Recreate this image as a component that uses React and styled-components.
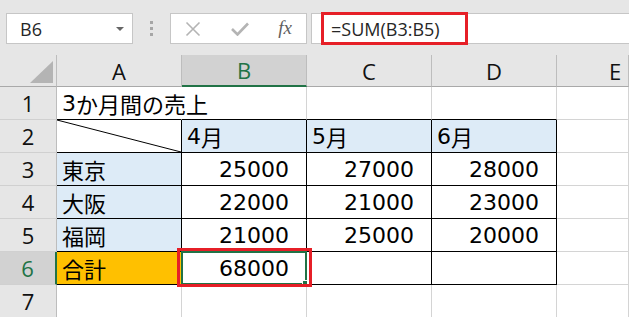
import { Fragment } from "react";
import styled, { createGlobalStyle } from "styled-components";

const GlobalStyle = createGlobalStyle`
  html, body {
    margin: 0;
    padding: 0;
    background: #ffffff;
    overflow: hidden;
  }
`;

const Page = styled.div`
  position: relative;
  width: 629px;
  height: 317px;
  overflow: hidden;
  font-family: "Open Sans", "Noto Sans", sans-serif;
`;

const Toolbar = styled.div`
  display: flex;
  align-items: flex-start;
  height: 55px;
  padding-top: 13px;
  box-sizing: border-box;
  background: #e6e6e6;
`;

const Box = styled.div`
  display: flex;
  align-items: center;
  height: 31px;
  box-sizing: border-box;
  background: #ffffff;
  border: 1px solid #c6c6c6;
`;

const NameBox = styled(Box)`
  width: 127px;
  margin-left: 6px;
  padding: 0 8px 0 13px;
  justify-content: space-between;
  font-size: 18px;
  color: #262626;
`;

const Caret = styled.span`
  width: 0;
  height: 0;
  border-left: 4px solid transparent;
  border-right: 4px solid transparent;
  border-top: 4px solid #666666;
`;

const Grip = styled.div`
  display: flex;
  flex-direction: column;
  justify-content: center;
  align-items: center;
  gap: 3px;
  width: 37px;
  height: 31px;
`;

const GripDot = styled.span`
  width: 3px;
  height: 3px;
  background: #a6a6a6;
`;

const FuncBox = styled(Box)`
  width: 137px;
  padding: 0 14px;
  justify-content: space-between;
`;

const Fx = styled.span`
  font-family: "Liberation Serif", serif;
  font-style: italic;
  font-size: 19px;
  color: #5f5f5f;
  margin-bottom: 2px;
`;

const FormulaBox = styled(Box)`
  flex: 1;
  margin-left: 4px;
  border-right: none;
  padding-left: 19px;
  font-size: 18px;
  color: #262626;
`;

const Sheet = styled.div`
  display: grid;
  grid-template-columns: 57px repeat(4, 125px) 1fr;
  grid-template-rows: 32px repeat(7, 33px);
  background: #e6e6e6;
`;

const Corner = styled.div`
  display: flex;
  align-items: flex-end;
  justify-content: flex-end;
  padding: 0 3px 3px 0;
  border-right: 1px solid #bdbdbd;
  border-bottom: 1px solid #a9a9a9;
`;

const ColHead = styled.div`
  display: flex;
  align-items: center;
  font-size: 22px;
  color: ${(p) => (p.$active ? "#217346" : "#111111")};
  background: ${(p) => (p.$active ? "#d2d2d2" : "#e6e6e6")};
  border-right: 1px solid #bdbdbd;
  border-bottom: ${(p) => (p.$active ? "2px solid #217346" : "1px solid #a9a9a9")};
  overflow: hidden;
  justify-content: ${(p) => (p.$cut ? "flex-start" : "center")};
  padding-left: ${(p) => (p.$cut ? "52px" : "0")};
`;

const RowHead = styled.div`
  display: flex;
  align-items: center;
  justify-content: center;
  font-size: 22px;
  color: ${(p) => (p.$active ? "#217346" : "#111111")};
  background: ${(p) => (p.$active ? "#d2d2d2" : "#e6e6e6")};
  border-right: ${(p) => (p.$active ? "2px solid #217346" : "1px solid #bdbdbd")};
  border-bottom: 1px solid #d0d0d0;
`;

const Cell = styled.div`
  position: relative;
  display: flex;
  align-items: center;
  justify-content: ${(p) => (p.$num ? "flex-end" : "flex-start")};
  padding: ${(p) => (p.$num ? "0 17px 0 0" : "0 0 0 5px")};
  box-sizing: border-box;
  font-family: "DejaVu Sans", "Noto Sans CJK JP", sans-serif;
  font-size: 22px;
  color: #000000;
  white-space: nowrap;
  background: ${(p) => p.$bg || "#ffffff"};
  border-right: 1px solid ${(p) => (p.$br ? "#000000" : p.$noBr ? "transparent" : "#d4d4d4")};
  border-bottom: 1px solid ${(p) => (p.$bb ? "#000000" : "#d4d4d4")};
  overflow: visible;
  z-index: ${(p) => (p.$over ? 1 : 0)};
`;

const Jp = styled.span`
  font-family: "Noto Sans CJK JP", sans-serif;
`;

const Diagonal = styled.svg`
  position: absolute;
  left: 0;
  top: 0;
  width: 100%;
  height: 100%;
`;

const Selected = styled.div`
  position: absolute;
  left: -1px;
  top: -1px;
  right: -1px;
  bottom: -1px;
  border: 2px solid #217346;
  pointer-events: none;
`;

const Handle = styled.span`
  position: absolute;
  right: -4px;
  bottom: -4px;
  width: 5px;
  height: 5px;
  background: #217346;
  border: 1px solid #ffffff;
`;

const Callout = styled.div`
  position: absolute;
  border: 3px solid #e61f27;
  box-sizing: border-box;
  pointer-events: none;
  z-index: 5;
`;

const BLUE = "#ddebf7";
const ORANGE = "#ffc000";

const cols = ["A", "B", "C", "D", "E"];

const tableRows = [
  { n: 3, label: "東京", vals: [25000, 27000, 28000] },
  { n: 4, label: "大阪", vals: [22000, 21000, 23000] },
  { n: 5, label: "福岡", vals: [21000, 25000, 20000] },
];

function CloseIcon() {
  return (
    <svg width="16" height="16" viewBox="0 0 16 16">
      <path d="M1.5 1.5 L14.5 14.5 M14.5 1.5 L1.5 14.5" stroke="#b4b4b4" strokeWidth="1.6" fill="none" />
    </svg>
  );
}

function CheckIcon() {
  return (
    <svg width="18" height="14" viewBox="0 0 18 14">
      <path d="M1 7 L6.5 12.5 L17 1.5" stroke="#b4b4b4" strokeWidth="2.6" fill="none" />
    </svg>
  );
}

function App() {
  return (
    <Page>
      <GlobalStyle />
      <Toolbar>
        <NameBox>
          B6
          <Caret />
        </NameBox>
        <Grip>
          <GripDot />
          <GripDot />
          <GripDot />
        </Grip>
        <FuncBox>
          <CloseIcon />
          <CheckIcon />
          <Fx>fx</Fx>
        </FuncBox>
        <FormulaBox>=SUM(B3:B5)</FormulaBox>
      </Toolbar>

      <Sheet>
        <Corner>
          <svg width="23" height="22" viewBox="0 0 23 22">
            <polygon points="23,0 23,22 0,22" fill="#b4b4b4" />
          </svg>
        </Corner>
        {cols.map((c) => (
          <ColHead key={c} $active={c === "B"} $cut={c === "E"}>
            {c}
          </ColHead>
        ))}

        {/* row 1 */}
        <RowHead>1</RowHead>
        <Cell $bb $noBr $over>
          3<Jp>か月間の売上</Jp>
        </Cell>
        <Cell $bb />
        <Cell $bb />
        <Cell $bb />
        <Cell />

        {/* row 2 */}
        <RowHead>2</RowHead>
        <Cell $br $bb>
          <Diagonal viewBox="0 0 124 32" preserveAspectRatio="none">
            <line x1="0" y1="0" x2="124" y2="32" stroke="#000" strokeWidth="1" />
          </Diagonal>
        </Cell>
        {["4", "5", "6"].map((m) => (
          <Cell key={m} $br $bb $bg={BLUE}>
            {m}
            <Jp>月</Jp>
          </Cell>
        ))}
        <Cell />

        {tableRows.map((r) => (
          <Fragment key={r.n}>
            <RowHead>{r.n}</RowHead>
            <Cell $br $bb $bg={BLUE}>
              <Jp>{r.label}</Jp>
            </Cell>
            {r.vals.map((v, i) => (
              <Cell key={i} $num $br $bb>
                {v}
              </Cell>
            ))}
            <Cell />
          </Fragment>
        ))}

        {/* row 6 */}
        <RowHead $active>6</RowHead>
        <Cell $br $bb $bg={ORANGE}>
          <Jp>合計</Jp>
        </Cell>
        <Cell $num $br $bb>
          68000
          <Selected>
            <Handle />
          </Selected>
        </Cell>
        <Cell $br $bb />
        <Cell $br $bb />
        <Cell />

        {/* row 7 */}
        <RowHead>7</RowHead>
        <Cell />
        <Cell />
        <Cell />
        <Cell />
        <Cell />
      </Sheet>

      <Callout style={{ left: 321, top: 12, width: 147, height: 33 }} />
      <Callout style={{ left: 177, top: 248, width: 135, height: 39 }} />
    </Page>
  );
}

export default App;
